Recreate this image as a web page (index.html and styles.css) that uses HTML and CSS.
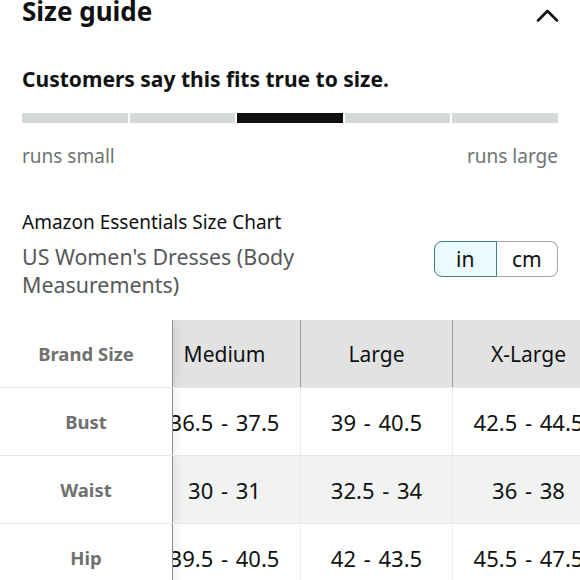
FILE: index.html
```html
<!DOCTYPE html>
<html lang="en">
<head>
<meta charset="utf-8">
<title>Size guide</title>
<link rel="stylesheet" href="styles.css">
</head>
<body>
<div class="page">
  <div class="head">
    <h1 class="title">Size guide</h1>
    <svg class="chev" width="24" height="24" viewBox="0 0 24 24" aria-hidden="true">
      <path d="M2 17.5 L11.5 8 L21 17.5" fill="none" stroke="#0f1111" stroke-width="2.5" stroke-linecap="round" stroke-linejoin="round"/>
    </svg>
  </div>

  <p class="fit">Customers say this fits true to size.</p>
  <div class="bar">
    <span class="seg"></span><span class="seg"></span><span class="seg on"></span><span class="seg"></span><span class="seg"></span>
  </div>
  <div class="scale"><span>runs small</span><span>runs large</span></div>

  <p class="chart">Amazon Essentials Size Chart</p>
  <div class="subrow">
    <p class="sub">US Women's Dresses (Body Measurements)</p>
    <div class="toggle"><span class="opt sel">in</span><span class="opt">cm</span></div>
  </div>
</div>

<div class="table">
  <div class="row hdr">
    <div class="lab">Brand Size</div>
    <div class="cell first">Medium</div>
    <div class="cell">Large</div>
    <div class="cell">X-Large</div>
  </div>
  <div class="row">
    <div class="lab">Bust</div>
    <div class="cell first num">36.5 - 37.5</div>
    <div class="cell num">39 - 40.5</div>
    <div class="cell num">42.5 - 44.5</div>
  </div>
  <div class="row alt">
    <div class="lab">Waist</div>
    <div class="cell first num">30 - 31</div>
    <div class="cell num">32.5 - 34</div>
    <div class="cell num">36 - 38</div>
  </div>
  <div class="row">
    <div class="lab">Hip</div>
    <div class="cell first num">39.5 - 40.5</div>
    <div class="cell num">42 - 43.5</div>
    <div class="cell num">45.5 - 47.5</div>
  </div>
</div>
</body>
</html>
```

FILE: styles.css
```css
* { box-sizing: border-box; }
html, body { margin: 0; padding: 0; background: #fff; }
body {
  font-family: "Noto Sans", "Open Sans", sans-serif;
  color: #0f1111;
  width: 580px;
  height: 580px;
  overflow: hidden;
}
.page { padding: 0 22px; }
.head {
  display: flex;
  justify-content: space-between;
  align-items: flex-start;
}
.title {
  margin: 0;
  font-size: 26px;
  font-weight: 700;
  line-height: 23px;
}
.chev { display: block; margin-top: 3px; margin-right: -2px; }
.fit {
  margin: 38px 0 0;
  font-size: 21px;
  font-weight: 700;
  line-height: 28px;
}
.bar {
  margin-top: 20px;
  display: flex;
  gap: 2px;
  height: 10px;
}
.seg { flex: 1; background: #d5d9d9; }
.seg.on { background: #0f1111; }
.scale {
  margin-top: 20px;
  display: flex;
  justify-content: space-between;
  font-size: 19px;
  line-height: 26px;
  color: #6f7373;
}
.chart {
  margin: 40px 0 0;
  font-size: 19px;
  line-height: 26px;
}
.subrow {
  margin-top: 8px;
  display: flex;
  align-items: flex-start;
  gap: 20px;
}
.sub {
  flex: 1;
  margin: 0;
  font-size: 21.4px;
  line-height: 28px;
  color: #565959;
}
.toggle {
  flex: none;
  display: flex;
  width: 124px;
  height: 36px;
  margin-top: -2px;
}
.opt {
  flex: 1;
  display: flex;
  align-items: center;
  justify-content: center;
  font-size: 21px;
  border: 1px solid #a6a6a6;
  background: #fff;
}
.opt.sel {
  background: #ebfbfd;
  border-color: #3f7d86;
  border-radius: 8px 0 0 8px;
}
.opt:last-child {
  border-left: none;
  border-radius: 0 8px 8px 0;
}
.table { margin-top: 21px; }
.row {
  display: flex;
  height: 68px;
  border-top: 1px solid #e7e7e7;
  overflow: hidden;
}
.row.hdr { height: 67px; border-top: none; }
.lab {
  flex: 0 0 173px;
  position: relative;
  z-index: 1;
  background: #fff;
  border-right: 1px solid #8f8f8f;
  box-shadow: 4px 0 9px rgba(0, 0, 0, 0.07);
  display: flex;
  align-items: center;
  justify-content: center;
  font-size: 18.5px;
  font-weight: 700;
  color: #707070;
}
.cell {
  flex: 0 0 152px;
  display: flex;
  align-items: center;
  justify-content: center;
  font-size: 21px;
  border-left: 1px solid #ececec;
  white-space: nowrap;
}
.cell.num { font-size: 22px; word-spacing: 2px; }
.cell.first { margin-left: -25px; }
.hdr .cell { background: #e2e2e2; border-left-color: #9a9a9a; }
.alt .cell { background: #f2f2f2; }
```
